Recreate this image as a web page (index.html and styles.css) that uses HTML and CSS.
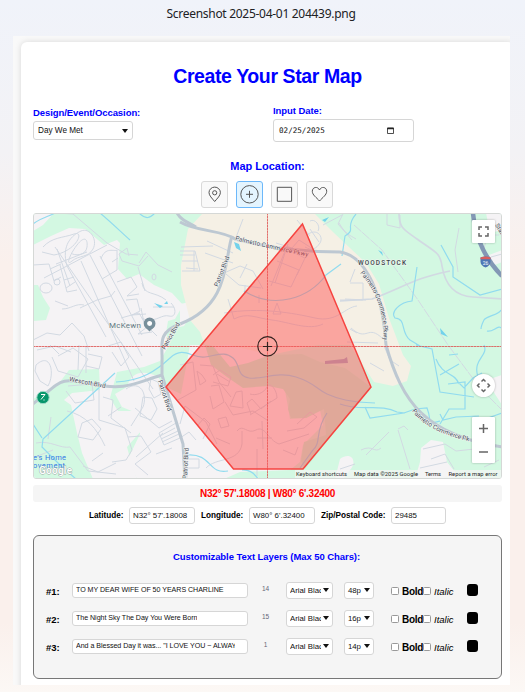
FILE: index.html
```html
<!DOCTYPE html>
<html lang="en">
<head>
<meta charset="utf-8">
<title>Create Your Star Map</title>
<link rel="stylesheet" href="styles.css">
</head>
<body>
<header class="filename">Screenshot 2025-04-01 204439.png</header>
<div class="viewport">
<main class="card">
  <h1>Create Your Star Map</h1>
  <section class="top-fields">
    <div class="field occasion"><label>Design/Event/Occasion:</label><div class="box select">Day We Met<i class="caret"></i></div></div>
    <div class="field date"><label>Input Date:</label><div class="box date-box"><span>02/25/2025</span>
      <svg class="calendar" viewBox="0 0 7 7"><path d="M.5 1h6v5.500h-6z" fill="none" stroke="#222" stroke-width=".8"/><path d="M.3.7h6.400v1.500H.3z" fill="#222"/></svg></div></div>
  </section>
  <h2>Map Location:</h2>
  <div class="tools">
    <div class="tool"><svg viewBox="0 0 25 25"><path d="M12.700 19.500C10 16.300 7 13.500 7 10.600a5.700 5.500 0 0 1 11.400 0c0 2.900-3 5.700-5.700 8.900z"/><circle cx="12.700" cy="10.800" r="2.100"/></svg></div>
    <div class="tool active"><svg viewBox="0 0 25 25"><circle cx="12.500" cy="12.300" r="8.700"/><path d="M12.500 8.800v7M9 12.300h7"/></svg></div>
    <div class="tool"><svg viewBox="0 0 25 25"><path d="M5.300 5.300h14.300v14H5.300z"/></svg></div>
    <div class="tool"><svg viewBox="0 0 25 25"><path d="M12.500 19C9.500 15.500 5.300 13 5.300 9.300c0-4.400 5.500-5.300 7.200-1.300 1.700-4 7.200-3.100 7.200 1.300 0 3.700-4.200 6.200-7.200 9.700z"/></svg></div>
  </div>
  <div class="map">
  <svg viewBox="33 213 469 266" width="469" height="266">
    <rect class="green" x="33" y="213" width="469" height="266"/>
    <g class="res">
      <path d="M33 245L51 236 69 228 85 229 104 245 117 240 120 243 118 269 127 279 139 274 154 285 172 293 183 305 175 319 168 321 166 333 169 345 160 361 144 367 117 372 110 398 118 411 138 411 142 430 127 447 130 458 137 479H93L82 453 77 433 71 405 64 400 72 393 100 390 99 369 69 370 57 386 33 399V321L46 320 50 308 43 297 38 285H33z"/>
      <path d="M127 387C132 370 144 371 157 376L166 387 181 394 190 345 260 345 284 385 288 407 290 419 306 418 320 410 323 425 303 445 300 462 290 470 240 472 224 479H137L128 459 140 434 139 414 122 407 115 394z"/>
      <path d="M33 213H54L43 225 33 231zM180 304L190 302 193 312 184 326 180 327zM486 213H502V230L490 233zM489 255L502 250V262L492 266zM490 379L502 375V405L493 391zM420 462L421 448 431 440 443 442 447 462 459 477 415 479zM340 459C351 451 358 461 350 470L343 479h-8z"/>
    </g>
    <path class="sand" d="M203 213H314L333 232 350 248 366 263 379 284 389 318 403 355 411 366 407 381 393 386 374 382 350 345 318 345 270 355 229 345 205 346 200 332 190 320 181 285 181 265 188 229z"/>
    <path class="deep" d="M205 345L213 346 230 367 248 363 270 355 302 354 320 362 345 368 371 387 305 469 301 461 304 442 326 435 324 409 306 418 291 418 288 409 290 399 283 389 268 386 243 388 227 377 211 365z"/>
    <g class="minor">
      <path d="M43 247C52 237 63 238 74 234S77 251 54 255L42 252M70 286L57 249M55 247l98 142M67 266C61 245 72 235 81 231S98 240 93 249 79 255 72 261 70 254 77 245 88 238 87 247 74 256 71 253M44 278l63-33M33 265l16-1 5 17 7-4M50 269l11-5M81 261l53 120M90 255l52 101M67 266l39 71M100 256l42 79M60 265l7 27 10-2M66 288l9-6M64 280l10-3M56 264l31-12M101 259c4-13 14-7 16-9v20l-15 9M112 262l6-4M117 282l14-5 6 10-10 9 12-2M126 300l11-1 3 12-8 4 14-1M121 318l18-5 8 14-9 7 14-2M33 340l14-7 13 2 12-12 12 13 5 15M37 350l18-4 16 6M50 345l9 9M55 301l13 5M62 309c9 0 14-6 22-4M80 308l17-8 14-4 4-5M142 318l12 6M166 344l11-18M157 336l-13-13-3-15M148 319c8 3 14-5 21-3s8-7 2-13M139 263l7-11 12 13 14 7M129 256l-2-8-8 6 3 7 17 5 9-10M138 267l7 24M142 283c2 13 13 8 24 17M153 307l21 0"/>
      <ellipse cx="46" cy="288" rx="6" ry="5"/><ellipse cx="57" cy="282" rx="3" ry="3"/><ellipse cx="154" cy="277" rx="2" ry="3"/>
      <path d="M36 365C51 351 55 374 48 386L40 381 35 371zM58 356L73 348 88 359 78 377 58 371 52 357M79 345L78 370M86 346L86 373M88 354L102 357 99 369 86 366M108 346l13-4 8 15-8 9-9-14M68 386l24-2 2 16-19 3-9-12M67 411c19 4 30 18 38 35M82 423l10-4 9 10-8 11-15-3zM99 389v31l26 8 7 22-6 10-14 2M103 397l10 3-2 18 20 15M108 416l13-9M126 389c14-10 22 5 17 18l-12 19M143 397l9 1 5 11-6 11-11-4zM151 379l7 3 3 12-7 4-5-9zM135 408l24 20 13-7M128 437l13-1 10 16-16 12 13 11M36 443c15-3 24 6 34 4l18 24 28 3M35 457l18-7M48 439l3-22M83 466l15 6 18-9M92 461l11-8M156 454l16-6M136 457l27-24"/>
      <path d="M159 433L176 423 180 438 164 445zM160 436l15-8M161 439l17-8M162 442l17-8M180 424l5-18 21 16 11 22M180 438l9-6 7 8M187 459h12v9h-12M187 468v10"/>
      <path d="M180 365L193 362 196 390 178 400M197 371L202 375 206 381 200 385zM213 375l7-5 11 7-3 9-15-4M200 365l13 1 6 16 12 15M211 386l8-1 5 17-11 7-3-13M236 392l6-1 1 17-13-2 6-14M230 382l-13-8M250 394c6 2 14-1 17-7s10 3 10 11l-27 17M251 414l-4-11 5-4 9 10 10-8M225 402l8 13 20-4 14 9M218 419l8-2 3 9-8 2zM198 425l6-7 6 6-7 15M237 431c6-8 10 4 19-1s12 10 23 14l30-10M242 431v13c-3 19-26 13-36 24M262 421l1 28M257 438h15M216 438l14 6M287 431l17-3 13-11-7-5-13 12M257 449v27M283 450l12 5 3-8"/>
      <path d="M57 213l16 1 34 29 19 11 12 1M180 251h15l5 20h-18M182 261h16M194 271v-20M205 253l28 10M186 268l12 1M181 247l32-1M180 255h15M207 241l26 12M235 240l8-21M224 273l16-7 13 5 10 18M226 274l13 11 22 3M240 278l7-14M277 261l22 9-8 17-22-6M285 251l-14 35M288 244l-13 39M290 251l15 7-8 17M276 243l16 5 7-8 14 9M297 220l13 16M310 229l9 13M307 235c10-8 17 2 13 8s-8 8-15 4M228 299l6 20c14-7 21-1 38 1s37 11 51 4M224 313c36-6 69 0 91 5s30-11 42-12M277 303l-4 11h8zM245 285v9M259 295v8M350 282l5-13M345 299l21 1M340 300h23v-17h-13M351 328c17 15 16-5 32 11M347 342l31 1M350 329l7 4M384 346l6 14 9 6M459 228l-4 22 3 22M387 213v12l13 3v-13M499 235h-11l-4 13M491 257l11-3M343 214l-5 10 14 16M339 223c7 12 11 12 17 16M310 221c5-3 11 5 8 10M323 225l19-10"/>
      <path d="M340 301l32-2c35-13 39-20 78-28M399 213c0 16 6 17 18 26 18 13 23 13 25 27 3 19 13 30 31 31l29 2" stroke-width="1.700"/>
      <path d="M354 225L382 250 418 300 448 345 480 388 502 410" stroke-dasharray="10 1"/>
      <path d="M366 455l23-23M361 450c12-6 13 4 20-2M398 430l12 39M398 429l6-3 4 4M423 449l22-5 11 7 46-5M431 459l14-5 9 15M420 468l27-6M484 467l15-7M340 469l15-5M370 363l14 8"/>
    </g>
    <g class="water">
      <path d="M33 224C40 218 48 217 55 213M100 213c12 10 22 20 30 27M139 213c7 7 11 5 16 0M356 214c-12 14 1 15-11 22l-3 20M417 267l-5 34c-12 1-22 11-17 17 12 1 5 14 15 22l10 6M441 245l12 22v10l27 18 22-6M501 310c-2 5-15 6-17 10s-3 6-3 9M487 331c6 2 12-8 15-2M116 382c25-1 40-11 54-24s22 1 35-1 20-6 28 1 3 18 16 20 28-7 47-1 20 12 31 17 22 8 48 9M340 404c20 8 41-1 57 8l8 1M365 407l5 11 34-5 11-4 12-1c6 15-2 17 13 13M327 413c-13 19-5 29-14 37l-13 18M115 373L43 439 42 447 60 465 76 479M42 438L33 424M187 455c25-2 21 20 41 16M242 470c15-1 15 13 18 8M416 345l16 4 8 43 34 5M436 359c7 18 18 12 23 25M440 375l19-11M449 355l9-1M448 384l17-2v27h-16l-9 15M440 414l3 6 13-3 23-1M458 382l6 6 9-10 9-5M484 345c5 11-12 14-6 32M476 388l17 1M488 418l14-5"/>
      <path d="M244 291c31 19 65 7 82-16l15-11"/>
      <path class="pond" d="M154 303l9 3-3 2zm10 1l3-3 1 3zM234 242l5 2 2 7-5-3zM322 220l7-3-4 5zM378 250l4 2 1 4zM440 328l8 9-7-3z"/>
    </g>
    <path class="station" d="M325 361L344 359 347 357 348 363 325 364z"/>
    <g class="major">
      <path d="M180 222C197 232 223 230 235 239C265 247 300 252 340 252C361 255 382 283 386 345M386 345C402 402 425 435 502 447"/>
      <path d="M232 236c-8 25-2 69-52 88-24 9-17 21-18 39v12l21 69 2 36"/>
      <path d="M33 404C63 380 58 377 92 384s43-1 70-9" />
      <path d="M177 213c4 7 10 9 19 14"/>
    </g>
    <path d="M473 213C475 240 488 262 502 276" fill="none" stroke="#8398b5" stroke-width="4.500"/>
    <g class="road-text">
      <path id="palmetto" d="M235 240Q265 248 310 257" fill="none"/>
      <path id="commerce" d="M360 273Q387 304 383 343" fill="none"/>
      <path id="south" d="M412 411Q428 433 476 443" fill="none"/>
      <text><textPath href="#palmetto" textLength="75">Palmetto Commerce Pkwy</textPath></text>
      <text><textPath href="#commerce" textLength="73">Palmetto Commerce Pkwy</textPath></text>
      <text><textPath href="#south" textLength="66">Palmetto Commerce Pk</textPath></text>
      <text transform="translate(218 287) rotate(-69)" textLength="32">Patriot Blvd</text>
      <text transform="translate(165 350) rotate(-60)" textLength="30">Patriot Blvd</text>
      <text transform="translate(158 381) rotate(72)" textLength="32">Patriot Blvd</text>
      <text transform="translate(187 479) rotate(-87)" textLength="31">Patriot Blvd</text>
      <text transform="translate(69 381) rotate(11)" textLength="37">Wescott Blvd</text>
      <text transform="translate(495 225) rotate(60)">State</text>
    </g>
    <text class="wood" x="358" y="265" textLength="48">WOODSTOCK</text>
    <text class="place" x="109" y="327.500" textLength="32">McKewn</text>
    <path d="M146 328h7l-3.500 3.500z" fill="#78909c"/><circle cx="149.600" cy="323.500" r="4.200" fill="white" stroke="#78909c" stroke-width="3.400"/>
    <path class="crosshair" d="M33 346.500H502M267.500 213V479"/>
    <polygon class="selection" points="302.500,224 371,387 303,469 233.500,469 166,387"/>
    <g fill="none" stroke="#33221f" stroke-width="1.200"><circle cx="267.500" cy="346.300" r="9.700"/><path d="M267.500 342v9M263 346.500h9"/></g>
    <circle cx="43" cy="397.500" r="6.200" fill="#07966b" stroke="#a3dcca"/><path d="M41 394.500h4l-4 5M43.500 400h1" fill="none" stroke="white" stroke-width="1"/>
    <path d="M480.500 257.500q5-2 10 0v4q0 4-5 6-5-2-5-6z" fill="#4e78b4"/><path d="M480.500 257.500q5-2 10 0v1.800h-10z" fill="#d95f5c"/><text x="482.700" y="264.500" font-size="5" fill="white">26</text>
    <g class="shop"><text x="33" y="459.500" textLength="33">e's Home</text><text x="33" y="468" textLength="32">ovement</text></g>
    <text class="google" x="39" y="474" textLength="33">Google</text>
    <path d="M295 470H502V479H295z" fill="#f5f5f5" opacity=".7"/>
    <g class="legal"><text x="296" y="476" textLength="51">Keyboard shortcuts</text><text x="354" y="476" textLength="64">Map data ©2025 Google</text><text x="425" y="476" textLength="16">Terms</text><text x="448.500" y="476" textLength="49">Report a map error</text></g>
    <g class="controls"><rect x="472" y="220" width="23" height="23" rx="1"/><circle cx="483.500" cy="385.500" r="11.500"/><rect x="472" y="417" width="23" height="46" rx="1"/></g>
    <g fill="none" stroke="#666" stroke-width="1.500"><path d="M479 230v-3h3M485 227h3v3M488 233v3h-3M482 236h-3v-3"/><path d="M481.500 381.500l2-2 2 2M479.500 383.500l-2 2 2 2M487.500 383.500l2 2-2 2M481.500 389.500l2 2 2-2M479 428.500h9M483.500 424v9M479 452h9"/></g>
  </svg>
  </div>
  <div class="coordinates">N32° 57'.18008 | W80° 6'.32400</div>
  <div class="coordinate-fields"><label class="lat">Latitude:</label><div class="box">N32° 57'.18008</div><label class="lon">Longitude:</label><div class="box">W80° 6'.32400</div><label class="zip">Zip/Postal Code:</label><div class="box">29485</div></div>
  <section class="layers">
    <h3>Customizable Text Layers (Max 50 Chars):</h3>
    <div class="layer"><b>#1:</b><div class="box layer-text"><span class="t1">TO MY DEAR WIFE OF 50 YEARS CHARLINE</span></div><small>14</small><div class="box font"><span>Arial Black</span><i class="caret"></i></div><div class="box size"><span>48p</span><i class="caret"></i></div><i class="check"></i><strong>Bold</strong><i class="check"></i><em>Italic</em><div class="swatch"></div></div>
    <div class="layer"><b>#2:</b><div class="box layer-text"><span class="t2">The Night Sky The Day You Were Born</span></div><small>15</small><div class="box font"><span>Arial Black</span><i class="caret"></i></div><div class="box size"><span>16p</span><i class="caret"></i></div><i class="check"></i><strong>Bold</strong><i class="check"></i><em>Italic</em><div class="swatch"></div></div>
    <div class="layer"><b>#3:</b><div class="box layer-text"><span class="t3">And a Blessed Day it was... "I LOVE YOU ~ ALWAYS</span></div><small>1</small><div class="box font"><span>Arial Black</span><i class="caret"></i></div><div class="box size"><span>14p</span><i class="caret"></i></div><i class="check"></i><strong>Bold</strong><i class="check"></i><em>Italic</em><div class="swatch"></div></div>
  </section>
</main>
</div>
</body>
</html>
```
FILE: styles.css
```css
* { box-sizing: border-box; }
body { margin: 0; width: 525px; height: 692px; overflow: hidden; font-family: "Liberation Sans", Arial, sans-serif; background: linear-gradient(#f0f3fa 0, #f3f2f5 22%, #faf0ec 38%, #faf0ec 90%, #fcf8f5); }
.filename { height: 36px; padding: 5px 3px 0 0; text-align: center; font: 12px/17px "Noto Sans", sans-serif; letter-spacing: -.29px; color: #202124; }
.viewport { width: 497px; height: 649px; margin-left: 13px; padding: 6px 0 0 8px; overflow: hidden; background: #f9f9f9; }
.card { width: 493px; height: 660px; padding: 0 12px; background: white; border-radius: 6px; box-shadow: 0 0 6px #0002; }
h1, h2, h3 { margin: 0; color: blue; text-align: center; white-space: nowrap; }
h1 { padding-top: 22px; height: 63px; font-size: 19.500px; letter-spacing: -.4px; line-height: 24px; }
.top-fields { display: grid; grid-template-columns: 240px 1fr; height: 54px; }
.field label { display: block; color: blue; font-weight: bold; font-size: 9.500px; letter-spacing: -.07px; line-height: 12px; white-space: nowrap; }
.occasion { padding-top: 2px; }
.date { padding-top: 0; }
.box { display: flex; align-items: center; background: white; border: 1px solid #d6d6d6; border-radius: 3px; color: #111; white-space: nowrap; overflow: hidden; font-size: 8.200px; }
.select { width: 100px; height: 19px; margin-top: 2px; padding: 0 4px; justify-content: space-between; font-size: 8.200px; }
.caret { width: 0; height: 0; flex: none; border: 2.500px solid transparent; border-top: 3.500px solid #111; border-bottom: 0; }
.select .caret, .font .caret, .size .caret { border-left-width: 3px; border-right-width: 3px; border-top-width: 4px; }
.date-box { width: 141px; height: 23px; margin-top: 2px; padding: 0 19px 0 5px; justify-content: space-between; font: 7.600px "DejaVu Sans Mono", monospace; }
.calendar { width: 7px; height: 7px; }
h2 { height: 22px; font-size: 11px; line-height: 14px; }
.tools { display: flex; justify-content: center; gap: 8px; height: 32px; padding-right: 1px; }
.tool { width: 27px; height: 27px; border: 1px solid #d9d9d9; border-radius: 3px; background: #f9f9f9; }
.tool svg { display: block; width: 25px; height: 25px; fill: none; stroke: #555; stroke-width: 1; }
.tool.active { background: #e4f5ff; border-color: #6cb8fa; }
.map { height: 266px; border: 1px solid #d5d8d6; border-radius: 3px; overflow: hidden; }
.map svg { display: block; margin: -1px; font-family: Roboto, sans-serif; }
.green { fill: #d3f8e2; }
.res { fill: #f5f3f5; }
.sand { fill: #f5f0e5; }
.deep { fill: #c4f6d8; }
.minor { fill: none; stroke: #d2d9e2; stroke-width: 1; stroke-linejoin: round; }
.water { fill: none; stroke: #91dbef; stroke-width: 1.200; }
.water .pond { fill: #73d2eb; stroke: none; }
.station { fill: #9fadc5; }
.major { fill: none; stroke: #bdc8d2; stroke-width: 3; stroke-linejoin: round; }
.road-text { fill: #3f4959; font-size: 6.300px; }
.road-text text, .wood, .place { paint-order: stroke; stroke: #f4f5f1; stroke-width: 1px; }
.wood { fill: #39474b; font-size: 6.500px; font-weight: 500; }
.place { fill: #627783; font-size: 8px; }
.crosshair { fill: none; stroke: #dc4c4b; stroke-width: .8; stroke-dasharray: 2.500 .4; }
.selection { fill: #ff5353; fill-opacity: .48; stroke: #f64440; stroke-width: 1.500; }
.shop { fill: #3478e5; font-size: 7.500px; }
.google { fill: white; stroke: #9ca6a2; stroke-width: .8px; paint-order: stroke; font-size: 10px; font-weight: 500; }
.legal { fill: #262626; font-size: 5.800px; }
.controls { fill: white; filter: drop-shadow(0 0 1px #0004); }
.coordinates { margin-top: 6px; height: 17px; background: #f5f5f5; border-radius: 3px; color: red; font-size: 10px; letter-spacing: -.28px; line-height: 17px; font-weight: bold; text-align: center; }
.coordinate-fields { display: grid; grid-template-columns: 40px 66px 54px 66px 76px 55px; margin: 5px 0 0 56px; height: 17px; align-items: center; font-size: 8.200px; }
.coordinate-fields label { font-weight: bold; white-space: nowrap; }
.coordinate-fields .lon, .coordinate-fields .zip { padding-left: 6px; }
.coordinate-fields .box { height: 17px; padding-left: 3px; font-size: 7.900px; }
.layers { height: 144px; margin-top: 11px; padding: 14px 0 0 12px; background: #f5f5f5; border: 1.500px solid #777; border-radius: 6px; }
h3 { height: 26px; margin-left: -14px; font-size: 9.500px; letter-spacing: -.07px; line-height: 13px; }
.layer { display: grid; grid-template-columns: 26px 176px 35px 3px 47px 11px 30px 17px 11px 21px 11px 19px 14px 12px; height: 28px; align-items: center; font-size: 9.500px; white-space: nowrap; }
.layer .layer-text { height: 15px; padding: 0 12px 0 3px; font-size: 7.100px; }
.layer-text span { overflow: hidden; letter-spacing: -.04px; }
.layer small { text-align: center; color: #667; font-size: 6.500px; padding-bottom: 3px; }
.layer .font { grid-column: 5; height: 17px; }
.layer .size { grid-column: 7; height: 17px; }
.font, .size { padding: 0 3px; justify-content: space-between; font-size: 7.800px; }
.font span { width: 31px; overflow: hidden; }
.size span { letter-spacing: -.1px; }
.check { grid-column: 9; width: 8px; height: 8px; margin-top: 1px; background: white; border: 1px solid #999; border-radius: 1.500px; }
.layer strong, .layer em, .layer b { padding-top: 2px; }
.layer strong { grid-column: 10; font-size: 10px; letter-spacing: -.3px; }
.layer strong + .check { grid-column: 11; }
.layer em { grid-column: 12; }
.swatch { grid-column: 14; width: 11px; height: 12px; border-radius: 3px; background: black; }
```
